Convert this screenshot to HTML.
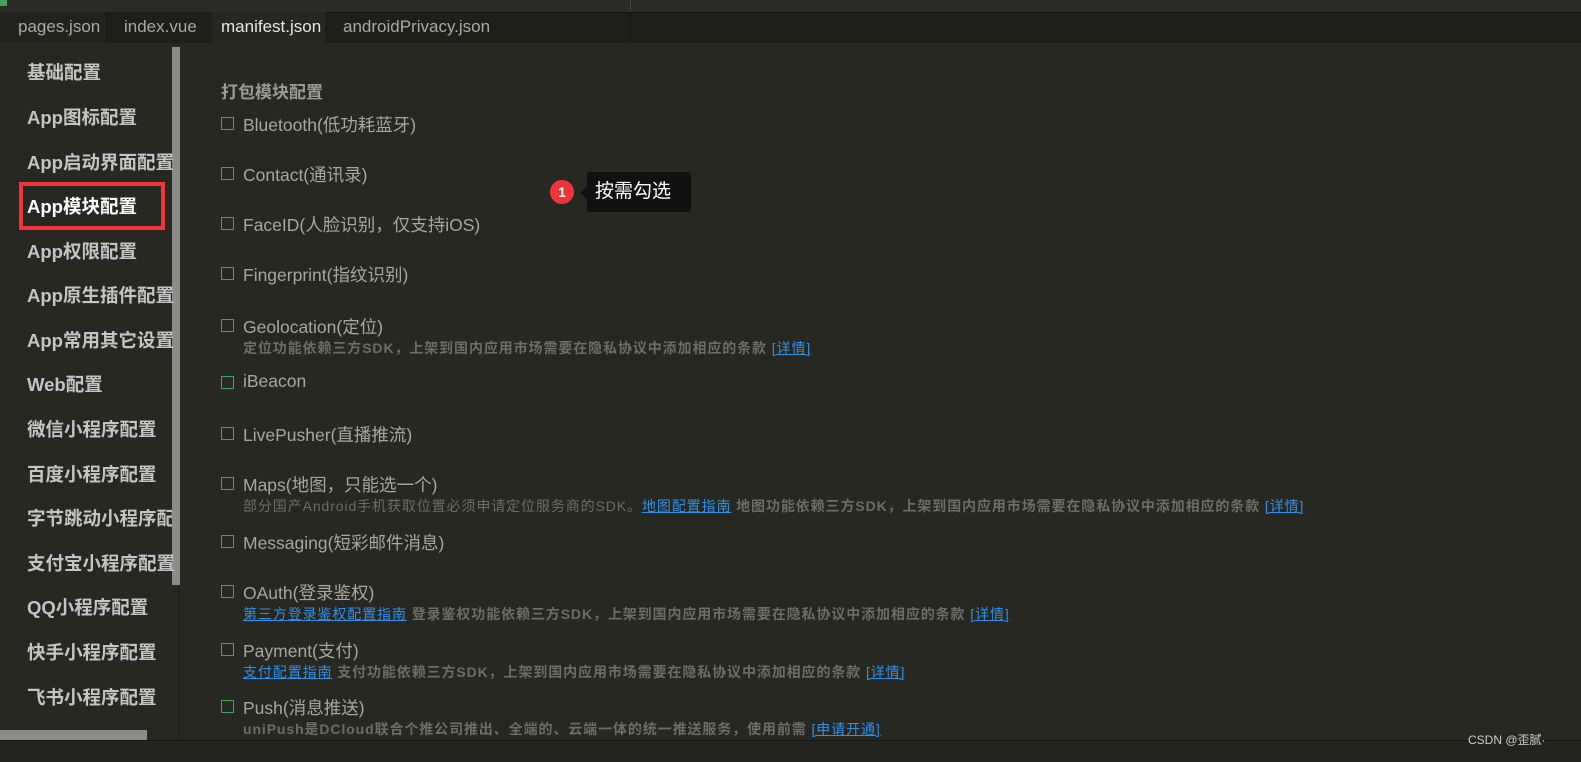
<!DOCTYPE html>
<html><head><meta charset="utf-8"><style>
*{margin:0;padding:0;box-sizing:border-box}
body{width:1581px;height:762px;background:#272822;overflow:hidden;position:relative;font-family:"Liberation Sans","Noto Sans CJK SC",sans-serif}
.a{position:absolute;white-space:nowrap}
.top{left:0;top:0;width:1581px;height:12px;background:#2b2c27}
.tb{left:0;top:12px;width:1581px;height:31px;background:#1e1f1b;border-top:1px solid #111}
.tab{top:12px;height:31px;line-height:30px;font-size:17px;color:#a8a8a8}
.side{left:0;top:43px;width:180px;height:697px;background:#272822;border-right:1px solid #1e1f1b}
.si{left:27px;font-size:18.5px;font-weight:bold;color:#c4c4c4}
.cb{position:absolute;left:221px;width:13px;height:13px;border:1px solid #3fa35a}
.lb{left:243px;font-size:17.5px;color:#a6a6a2}
.ds{left:243px;font-size:14px;letter-spacing:0.9px;color:#6c6c68;font-weight:bold}
.ln{color:#2f8fe6;text-decoration:underline;font-weight:normal}
</style></head><body>
<div class="a top"></div>
<div class="a" style="left:0;top:0;width:7px;height:6px;background:#3fa35a"></div>
<div class="a" style="left:630px;top:0;width:1px;height:12px;background:#444"></div>
<div class="a tb"></div>
<div class="a tab" style="left:0;width:106px;background:#22231f;padding-left:18px">pages.json</div>
<div class="a tab" style="left:106px;width:106px;border-left:1px solid #151612;padding-left:17px;background:#1e1f1b">index.vue</div>
<div class="a tab" style="left:212px;width:113px;background:#262722;color:#e6e6e6;padding-left:9px">manifest.json</div>
<div class="a tab" style="left:325px;width:150px;padding-left:18px">androidPrivacy.json</div>
<div class="a" style="left:630px;top:12px;width:1px;height:31px;background:#151612"></div>
<div class="a side"></div>
<div class="a" style="left:172px;top:47px;width:8px;height:538px;background:#8c8c8c"></div>
<div class="a" style="left:0;top:730px;width:147px;height:10px;background:#8c8c8c"></div>
<div class="a si" style="top:59px">基础配置</div>
<div class="a si" style="top:104px">App图标配置</div>
<div class="a si" style="top:149px">App启动界面配置</div>
<div class="a si" style="top:193px;color:#fff">App模块配置</div>
<div class="a" style="left:19px;top:182px;width:146px;height:48px;border:4px solid #f0343a"></div>
<div class="a si" style="top:238px">App权限配置</div>
<div class="a si" style="top:282px">App原生插件配置</div>
<div class="a si" style="top:327px">App常用其它设置</div>
<div class="a si" style="top:371px">Web配置</div>
<div class="a si" style="top:416px">微信小程序配置</div>
<div class="a si" style="top:461px">百度小程序配置</div>
<div class="a si" style="top:505px;width:145px;overflow:hidden">字节跳动小程序配置</div>
<div class="a si" style="top:550px">支付宝小程序配置</div>
<div class="a si" style="top:594px">QQ小程序配置</div>
<div class="a si" style="top:639px">快手小程序配置</div>
<div class="a si" style="top:684px">飞书小程序配置</div>

<div class="a" style="left:221px;top:78px;font-size:17px;font-weight:bold;color:#9a9a96">打包模块配置</div>

<div class="cb" style="top:117px"></div><div class="a lb" style="top:112px">Bluetooth(低功耗蓝牙)</div>
<div class="cb" style="top:167px"></div><div class="a lb" style="top:162px">Contact(通讯录)</div>
<div class="cb" style="top:217px"></div><div class="a lb" style="top:212px">FaceID(人脸识别，仅支持iOS)</div>
<div class="cb" style="top:267px"></div><div class="a lb" style="top:262px">Fingerprint(指纹识别)</div>
<div class="cb" style="top:319px"></div><div class="a lb" style="top:314px">Geolocation(定位)</div>
<div class="a ds" style="top:338px">定位功能依赖三方SDK，上架到国内应用市场需要在隐私协议中添加相应的条款 <span class="ln">[详情]</span></div>
<div class="cb" style="top:376px"></div><div class="a lb" style="top:371px">iBeacon</div>
<div class="cb" style="top:427px"></div><div class="a lb" style="top:422px">LivePusher(直播推流)</div>
<div class="cb" style="top:477px"></div><div class="a lb" style="top:472px">Maps(地图，只能选一个)</div>
<div class="a ds" style="top:496px"><span style="font-weight:normal">部分国产Android手机获取位置必须申请定位服务商的SDK。</span><span class="ln">地图配置指南</span> 地图功能依赖三方SDK，上架到国内应用市场需要在隐私协议中添加相应的条款 <span class="ln">[详情]</span></div>
<div class="cb" style="top:535px"></div><div class="a lb" style="top:530px">Messaging(短彩邮件消息)</div>
<div class="cb" style="top:585px"></div><div class="a lb" style="top:580px">OAuth(登录鉴权)</div>
<div class="a ds" style="top:604px"><span class="ln">第三方登录鉴权配置指南</span> 登录鉴权功能依赖三方SDK，上架到国内应用市场需要在隐私协议中添加相应的条款 <span class="ln">[详情]</span></div>
<div class="cb" style="top:643px"></div><div class="a lb" style="top:638px">Payment(支付)</div>
<div class="a ds" style="top:662px"><span class="ln">支付配置指南</span> 支付功能依赖三方SDK，上架到国内应用市场需要在隐私协议中添加相应的条款 <span class="ln">[详情]</span></div>
<div class="cb" style="top:700px"></div><div class="a lb" style="top:695px">Push(消息推送)</div>
<div class="a ds" style="top:719px">uniPush是DCloud联合个推公司推出、全端的、云端一体的统一推送服务，使用前需 <span class="ln">[申请开通]</span></div>

<div class="a" style="left:550px;top:180px;width:24px;height:24px;border-radius:50%;background:#f0343a;color:#fff;font-size:14px;font-weight:bold;text-align:center;line-height:24px">1</div>
<div class="a" style="left:580px;top:187px;width:0;height:0;border-top:6px solid transparent;border-bottom:6px solid transparent;border-right:7px solid #111"></div>
<div class="a" style="left:587px;top:172px;width:104px;height:40px;background:#111;border-radius:3px;color:#fff;font-size:19px;line-height:40px;padding-left:8px">按需勾选</div>

<div class="a" style="left:0;top:740px;width:1581px;height:22px;background:#232420;border-top:1px solid #151612"></div>
<div class="a" style="left:1468px;top:731px;font-size:12px;color:#ccc">CSDN @歪腻·</div>
</body></html>
